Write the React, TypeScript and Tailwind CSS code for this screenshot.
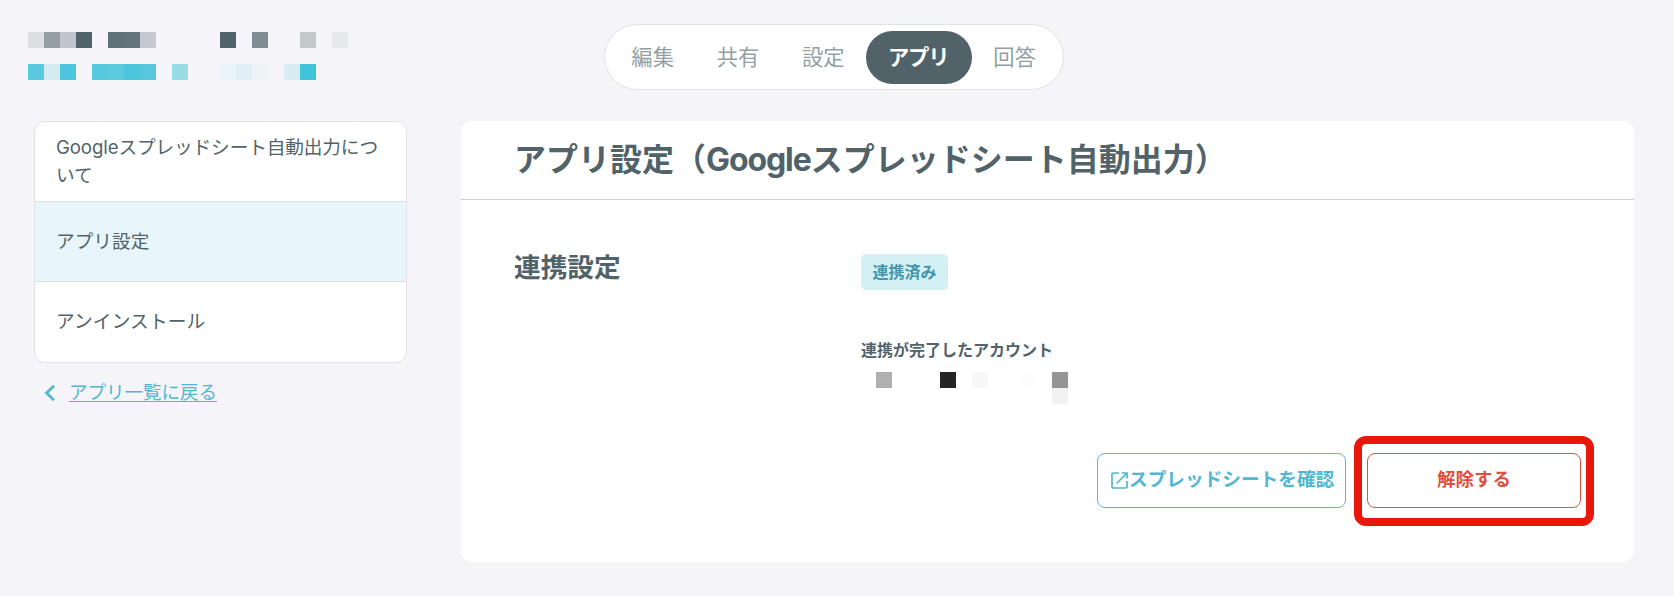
const TITLE_TILES = [
  'bg-[#dddee2]', 'bg-[#939da3]', 'bg-[#c2c5ce]', 'bg-[#4f636b]', '', 'bg-[#5f727a]', 'bg-[#64747c]', 'bg-[#c5c8d0]',
  '', '', '', '', 'bg-[#4f636b]', '', 'bg-[#808d95]', '', '', 'bg-[#c3c8cc]', '', 'bg-[#e7e8ec]',
];

const LINK_TILES = [
  'bg-[#58c9df]', 'bg-[#d3ebf1]', 'bg-[#4cc5dd]', '', 'bg-[#56c8dd]', 'bg-[#5ccbdd]', 'bg-[#4bc6dc]', 'bg-[#57c7dc]',
  '', 'bg-[#98dae6]', '', '', 'bg-[#eaf3fa]', 'bg-[#e3eff6]', 'bg-[#ecf2f6]', '', 'bg-[#d7ecf5]', 'bg-[#40c4db]',
];

const ACCOUNT_TILES = [
  'bg-[#b0b0b0]', '', '', '', 'bg-[#242424]', '', 'bg-[#f7f7f7]', '', '', 'bg-[#fdfdfd]', '', 'bg-[#959595]',
];

const ACCOUNT_TAIL_TILES = ['', '', '', '', '', '', '', '', '', '', '', 'bg-[#f1f1f1]'];

const TABS = ['編集', '共有', '設定', 'アプリ', '回答'];

function Mosaic({ tiles }: { tiles: string[] }) {
  return (
    <div className="flex h-4">
      {tiles.map((tile, i) => (
        <span key={i} className={`size-4 shrink-0 ${tile}`} />
      ))}
    </div>
  );
}

function Header() {
  return (
    <header className="flex h-[121px] items-start pt-6 pl-7">
      <div className="flex w-[576px] shrink-0 flex-col gap-4 pt-2">
        <Mosaic tiles={TITLE_TILES} />
        <Mosaic tiles={LINK_TILES} />
      </div>
      <nav className="flex h-[66px] w-[460px] items-center rounded-full border border-[#e1e1e4] bg-white pl-[5px]">
        {TABS.map((tab) => (
          <a
            key={tab}
            className={
              tab === 'アプリ'
                ? 'flex h-[53px] w-[106px] items-center rounded-full bg-[#516369] pt-px pl-[22px] text-[21.33px] font-bold tracking-[-1.2px] text-white'
                : 'flex h-[53px] items-center px-[21.33px] pt-px text-[21.33px] text-[#939fa3]'
            }
          >
            {tab}
          </a>
        ))}
      </nav>
    </header>
  );
}

function Sidebar() {
  return (
    <aside className="w-[373px] shrink-0 text-[18.67px] leading-7">
      <ul className="h-[242px] overflow-hidden rounded-[11px] border border-[#dfe1e4] bg-white">
        <li className="flex h-20 items-center border-b border-[#dadfe2] px-[21px]">
          <span className="tracking-[-0.12px]">Googleスプレッドシート自動出力について</span>
        </li>
        <li className="flex h-20 items-center border-b border-[#dadfe2] bg-[#e8f6fb] px-[21px]">アプリ設定</li>
        <li className="flex h-20 items-center px-[21px] pb-px tracking-[0.15px]">アンインストール</li>
      </ul>
      <a className="mt-[15px] flex items-center pl-[10px] text-[18.5px] text-[#52b7d1]">
        <svg className="mt-px mr-[13px] h-4 w-3" viewBox="0 0 12 16" fill="none" stroke="currentColor" strokeWidth="2.8">
          <path d="M10 0.8 2.6 8l7.4 7.2" />
        </svg>
        <span className="underline decoration-1 underline-offset-2">アプリ一覧に戻る</span>
      </a>
    </aside>
  );
}

function OpenIcon() {
  return (
    <svg className="size-[17px] shrink-0" viewBox="0 0 17 17" fill="none" stroke="currentColor" strokeWidth="1.7">
      <path d="M8 1H1.9a.9.9 0 0 0-.9.9v13.2a.9.9 0 0 0 .9.9h13.2a.9.9 0 0 0 .9-.9V9M10.5 1H16v5.5M16 1 5.5 11.5" />
    </svg>
  );
}

function Panel() {
  return (
    <main className="h-[441px] w-[1173px] rounded-[11px] bg-white">
      <h1 className="flex h-[79px] items-center border-b border-[#cccfd0] pl-[53px] text-[32px] font-semibold">
        <span>
          アプリ設定（<span className="font-bold tracking-[-1.1px]">Google</span>スプレッドシート自動出力）
        </span>
      </h1>
      <div className="flex pt-[54px] pl-[53px]">
        <h2 className="w-[347px] text-[26.67px] leading-[26px] font-semibold">連携設定</h2>
        <div>
          <span className="flex h-9 w-[87px] items-center justify-center rounded-[5px] bg-[#d3f0f4] pb-px text-base font-semibold text-[#4295aa]">
            連携済み
          </span>
          <p className="mt-12 mb-2.5 text-base leading-6 font-semibold">連携が完了したアカウント</p>
          <div className="pl-[15px]">
            <Mosaic tiles={ACCOUNT_TILES} />
            <Mosaic tiles={ACCOUNT_TAIL_TILES} />
          </div>
        </div>
      </div>
      <div className="mt-8 flex justify-end gap-2 pr-10 text-[18.5px] font-semibold">
        <button className="mt-[17px] flex h-[55px] w-[249px] items-center gap-px rounded-lg border border-[#56b9d2] pl-[13px] text-[18.67px] whitespace-nowrap text-[#52b7d1]">
          <OpenIcon />
          <span className="pb-0.5">スプレッドシートを確認</span>
        </button>
        <div className="h-[90px] w-60 rounded-xl border-8 border-[#e7180b] px-[5px] pt-[9px]">
          <button className="h-[55px] w-[214px] rounded-lg border border-[#e05343] pb-0.5 text-[#e04f3d]">解除する</button>
        </div>
      </div>
    </main>
  );
}

export default function App() {
  return (
    <div
      lang="ja"
      className="h-[596px] w-[1674px] overflow-hidden bg-[#f4f4f9] font-[Inter,'Noto_Sans_CJK_JP',sans-serif] text-[#516369]"
    >
      <Header />
      <div className="flex items-start gap-[54px] pl-[34px]">
        <Sidebar />
        <Panel />
      </div>
    </div>
  );
}
